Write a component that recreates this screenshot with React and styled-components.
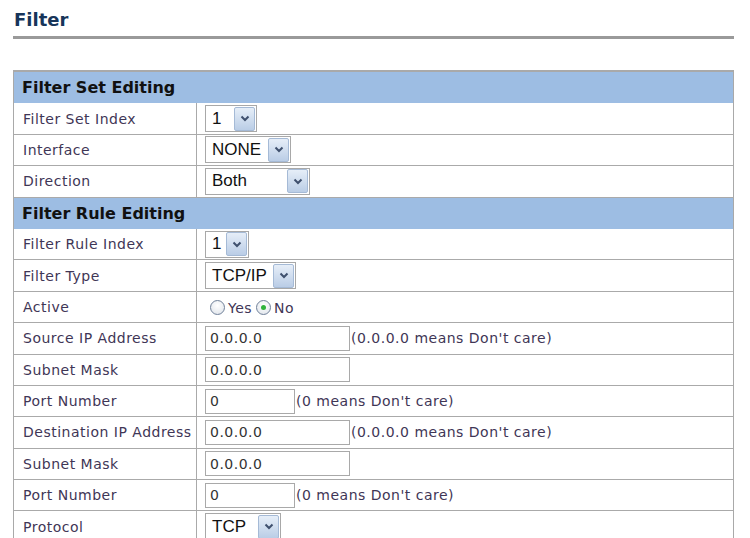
import React from 'react';
import styled, { createGlobalStyle } from 'styled-components';

const GlobalStyle = createGlobalStyle`
    body {
        margin: 0;
        background: #ffffff;
        font-family: "DejaVu Sans", Verdana, sans-serif;
    }
`;

const Page = styled.div`
    width: 750px;
    height: 538px;
    overflow: hidden;
    padding: 0 16px 0 13px;
    box-sizing: border-box;
`;

const Title = styled.h1`
    margin: 0;
    padding: 9px 0 0 1px;
    height: 27px;
    font-size: 18px;
    font-weight: bold;
    color: #17355a;
    border-bottom: 3px solid #9a9a9a;
`;

const Panel = styled.div`
    margin-top: 31px;
    border-top: 2px solid #a9a9a9;
    border-left: 1px solid #a9a9a9;
    border-right: 1px solid #a9a9a9;
`;

const SectionHeader = styled.div`
    height: 31.4px;
    box-sizing: border-box;
    display: flex;
    align-items: center;
    padding-left: 8px;
    background: #9dbde3;
    font-size: 16px;
    font-weight: bold;
    color: #111111;
`;

const Row = styled.div`
    display: grid;
    grid-template-columns: 183px 1fr;
    height: 31.4px;
    box-sizing: border-box;
    border-bottom: 1px solid #aaaaaa;
`;

const Label = styled.div`
    display: flex;
    align-items: center;
    padding-left: 9px;
    border-right: 1px solid #aaaaaa;
    font-size: 14px;
    letter-spacing: 0.5px;
    color: #3f3656;
    white-space: nowrap;
`;

const Field = styled.div`
    display: flex;
    align-items: center;
    padding-left: 8px;
    font-size: 14px;
    letter-spacing: 0.5px;
    color: #3f3656;
`;

const SelectBox = styled.div`
    display: inline-flex;
    align-items: center;
    justify-content: space-between;
    width: ${p => p.$width}px;
    height: 27px;
    box-sizing: border-box;
    border: 1px solid #a8a8a8;
    background: #ffffff;
    font-family: "Liberation Sans", Arial, sans-serif;
    font-size: 17px;
    letter-spacing: 0;
    color: #111111;
    padding: 0 1px 0 6px;
`;

const DropButton = styled.span`
    width: 21px;
    height: 24px;
    box-sizing: border-box;
    display: flex;
    align-items: center;
    justify-content: center;
    border: 1px solid #a5bad6;
    border-radius: 2px;
    background: linear-gradient(#e6eef8, #bacde6);
`;

const TextBox = styled.input`
    width: ${p => p.$width}px;
    height: 25px;
    box-sizing: border-box;
    border: 1px solid #a9a9a9;
    padding: 0 4px;
    margin: 0;
    font-family: "DejaVu Sans", Verdana, sans-serif;
    font-size: 14px;
    letter-spacing: 0.5px;
    color: #333333;
    outline: none;
`;

const Hint = styled.span`
    margin-left: 1px;
    white-space: nowrap;
`;

const RadioGroup = styled.div`
    display: flex;
    align-items: center;
    padding-left: 5px;
    padding-top: 2px;
`;

const RadioDot = styled.span`
    width: 15px;
    height: 15px;
    box-sizing: border-box;
    border-radius: 50%;
    border: 1px solid #6f8099;
    background: radial-gradient(circle at 50% 35%, #ffffff, #dde2e9);
    display: inline-flex;
    align-items: center;
    justify-content: center;
    margin-right: 3px;

    &::after {
        content: '';
        width: 5px;
        height: 5px;
        border-radius: 50%;
        background: ${p => (p.$checked ? '#2fb33b' : 'transparent')};
    }
`;

const RadioLabel = styled.span`
    margin-right: 4px;
`;

function Chevron() {
    return (
        <svg width="10" height="7" viewBox="0 0 10 7">
            <path d="M1.5 1.5 L5 5 L8.5 1.5" fill="none" stroke="#3f506e" strokeWidth="2" />
        </svg>
    );
}

function Select({ value, width }) {
    return (
        <SelectBox $width={width}>
            <span>{value}</span>
            <DropButton><Chevron /></DropButton>
        </SelectBox>
    );
}

function Radio({ label, checked }) {
    return (
        <>
            <RadioDot $checked={checked} />
            <RadioLabel>{label}</RadioLabel>
        </>
    );
}

function FormRow({ label, children }) {
    return (
        <Row>
            <Label>{label}</Label>
            <Field>{children}</Field>
        </Row>
    );
}

export default function App() {
    return (
        <>
            <GlobalStyle />
            <Page>
                <Title>Filter</Title>
                <Panel>
                    <SectionHeader>Filter Set Editing</SectionHeader>
                    <FormRow label="Filter Set Index"><Select value="1" width={52} /></FormRow>
                    <FormRow label="Interface"><Select value="NONE" width={86} /></FormRow>
                    <FormRow label="Direction"><Select value="Both" width={105} /></FormRow>

                    <SectionHeader>Filter Rule Editing</SectionHeader>
                    <FormRow label="Filter Rule Index"><Select value="1" width={44} /></FormRow>
                    <FormRow label="Filter Type"><Select value="TCP/IP" width={91} /></FormRow>
                    <FormRow label="Active">
                        <RadioGroup>
                            <Radio label="Yes" />
                            <Radio label="No" checked />
                        </RadioGroup>
                    </FormRow>
                    <FormRow label="Source IP Address">
                        <TextBox $width={145} defaultValue="0.0.0.0" />
                        <Hint>(0.0.0.0 means Don't care)</Hint>
                    </FormRow>
                    <FormRow label="Subnet Mask"><TextBox $width={145} defaultValue="0.0.0.0" /></FormRow>
                    <FormRow label="Port Number">
                        <TextBox $width={90} defaultValue="0" />
                        <Hint>(0 means Don't care)</Hint>
                    </FormRow>
                    <FormRow label="Destination IP Address">
                        <TextBox $width={145} defaultValue="0.0.0.0" />
                        <Hint>(0.0.0.0 means Don't care)</Hint>
                    </FormRow>
                    <FormRow label="Subnet Mask"><TextBox $width={145} defaultValue="0.0.0.0" /></FormRow>
                    <FormRow label="Port Number">
                        <TextBox $width={90} defaultValue="0" />
                        <Hint>(0 means Don't care)</Hint>
                    </FormRow>
                    <FormRow label="Protocol"><Select value="TCP" width={76} /></FormRow>
                </Panel>
            </Page>
        </>
    );
}
